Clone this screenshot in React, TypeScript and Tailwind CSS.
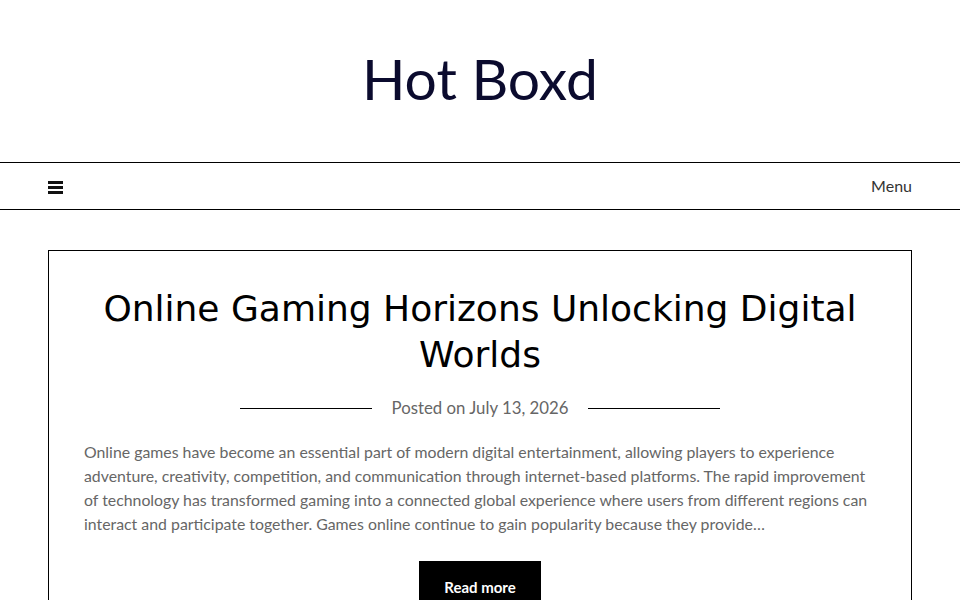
export default function App() {
  return (
    <div className="min-h-[600px] bg-white" style={{ fontFamily: "Lato, 'Noto Sans', sans-serif" }}>
      <header className="h-[162px] flex items-center justify-center">
        <h1 className="text-[57px] leading-none text-[#0b0b2e] pb-[6px]" style={{ fontFamily: "Lato, sans-serif" }}>
          Hot Boxd
        </h1>
      </header>
      <nav className="border-y border-black h-[48px] px-[48px] flex items-center justify-between">
        <svg width="15" height="13" viewBox="0 0 15 13" className="mt-[2px]">
          <rect x="0" y="0" width="15" height="3" fill="#111" />
          <rect x="0" y="5" width="15" height="3" fill="#111" />
          <rect x="0" y="10" width="15" height="3" fill="#111" />
        </svg>
        <span className="text-[16px] text-[#333]">Menu</span>
      </nav>
      <main className="px-[48px] pt-[40px]">
        <article className="border border-black px-[35px] pt-[35px] pb-[40px]">
          <h2
            className="text-center text-[36px] leading-[46px] text-black"
            style={{ fontFamily: "'DejaVu Sans', Verdana, sans-serif" }}
          >
            Online Gaming Horizons Unlocking Digital Worlds
          </h2>
          <div className="mt-[18px] flex items-center justify-center gap-[20px]">
            <div className="w-[132px] h-px bg-black" />
            <span className="text-[16.8px] leading-[24px] text-[#666]">Posted on July 13, 2026</span>
            <div className="w-[132px] h-px bg-black" />
          </div>
          <p className="mt-[20px] text-[15.85px] leading-[24px] text-[#666]">
            Online games have become an essential part of modern digital entertainment, allowing players to experience
            adventure, creativity, competition, and communication through internet-based platforms. The rapid improvement
            of technology has transformed gaming into a connected global experience where users from different regions can
            interact and participate together. Games online continue to gain popularity because they provide…
          </p>
          <div className="mt-[25px] flex justify-center">
            <a className="bg-black text-white font-bold text-[15px] leading-[21px] py-[16px] px-[25px]">Read more</a>
          </div>
        </article>
      </main>
    </div>
  );
}
